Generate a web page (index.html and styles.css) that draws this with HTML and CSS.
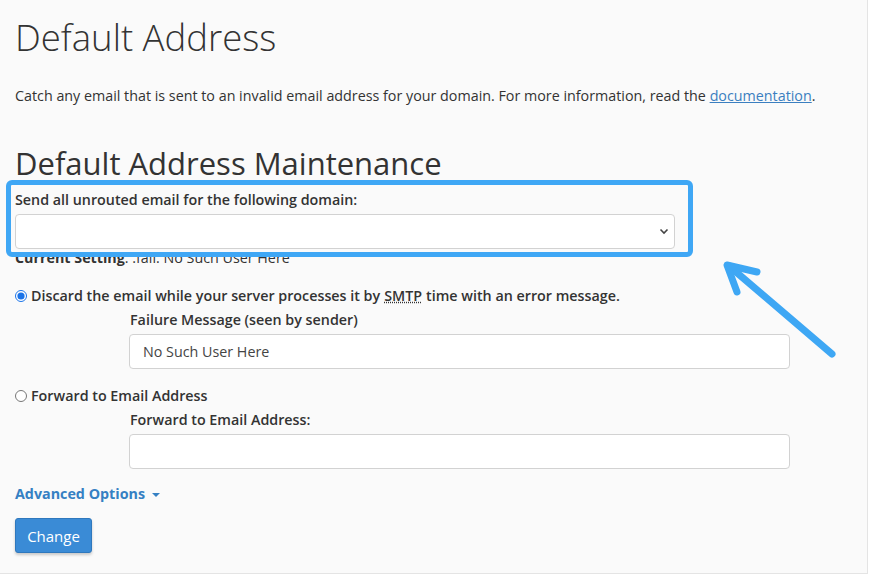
FILE: index.html
```html
<!DOCTYPE html>
<html lang="en">
<head>
  <meta charset="UTF-8">
  <title>Default Address</title>
  <link rel="stylesheet" href="styles.css">
</head>
<body>
  <div class="page">
    <h1>Default Address</h1>
    <p class="intro">Catch any email that is sent to an invalid email address for your domain. For more information, read the <a href="#">documentation</a>.</p>

    <h2>Default Address Maintenance</h2>

    <!-- domain picker -->
    <div class="domain-group">
      <label class="field-label">Send all unrouted email for the following domain:</label>
      <div class="select">
        <span class="select-value"></span>
        <svg class="chevron" width="10" height="7" viewBox="0 0 10 7">
          <path d="M1.5 1.5 L5 5 L8.5 1.5" fill="none" stroke="#444" stroke-width="1.6"/>
        </svg>
      </div>
      <div class="current"><b>Current Setting</b>: :fail: No Such User Here</div>
      <div class="highlight"></div>
    </div>

    <!-- options -->
    <div class="option">
      <label class="radio-row"><input type="radio" name="action" checked> Discard the email while your server processes it by <abbr title="Simple Mail Transfer Protocol">SMTP</abbr> time with an error message.</label>
      <div class="sub">
        <label class="field-label">Failure Message (seen by sender)</label>
        <input class="text-input" type="text" value="No Such User Here">
      </div>
    </div>

    <div class="option">
      <label class="radio-row"><input type="radio" name="action"> Forward to Email Address</label>
      <div class="sub">
        <label class="field-label">Forward to Email Address:</label>
        <input class="text-input" type="text">
      </div>
    </div>

    <a class="advanced" href="#">Advanced Options <span class="caret"></span></a>

    <button class="btn-primary">Change</button>

    <!-- annotation arrow -->
    <svg class="arrow" width="870" height="576" viewBox="0 0 870 576">
      <g stroke="#3ea7f4" stroke-width="7" stroke-linecap="round" stroke-linejoin="round" fill="none">
        <path d="M832 354 L729 266"/>
        <path d="M757 272 L727 265 L737 292"/>
      </g>
    </svg>
  </div>
</body>
</html>
```

FILE: styles.css
```css
/* Base */
body {
  margin: 0;
  background: #fff;
  font-family: "Open Sans", "Liberation Sans", sans-serif;
  font-size: 14.3px;
  line-height: 20px;
  color: #333;
}

.page {
  position: relative;
  width: 868px;
  height: 574px;
  padding: 0 15px;
  box-sizing: border-box;
  background: #fafafa;
  border-right: 1px solid #e4e4e4;
  border-bottom: 1px solid #e4e4e4;
  overflow: hidden;
}

h1 {
  margin: 0;
  padding-top: 16px;
  font-size: 36.5px;
  font-weight: 300;
  line-height: 42px;
  color: #333;
}

.intro {
  margin: 28px 0 0;
}

.intro a {
  color: #3b7fc0;
  text-decoration: underline;
}

h2 {
  margin: 41px 0 0;
  font-size: 31px;
  font-weight: 500;
  line-height: 33px;
  color: #333;
}

/* Domain group */
.domain-group {
  position: relative;
  margin-top: 10px;
}

.field-label {
  display: block;
  font-weight: 600;
}

.select {
  display: flex;
  justify-content: space-between;
  align-items: center;
  width: 660px;
  height: 35px;
  margin-top: 4px;
  padding: 0 5px 0 10px;
  box-sizing: border-box;
  background: #fff;
  border: 1px solid #d2d2d2;
  border-radius: 4px;
}

.current {
  line-height: 18px;
}

.current b {
  font-weight: 700;
}

.highlight {
  position: absolute;
  left: -9px;
  top: -10px;
  width: 687px;
  height: 77px;
  box-sizing: border-box;
  border: 5px solid #3fa7f5;
  border-radius: 6px;
}

/* Radio options */
.option {
  margin-top: 19px;
}

.option + .option {
  margin-top: 17px;
}

.radio-row {
  display: flex;
  align-items: center;
  gap: 4px;
  font-weight: 600;
}

.radio-row input {
  width: 12px;
  height: 12px;
  margin: 0;
  accent-color: #1a73e8;
}

abbr {
  text-decoration: underline dotted;
}

.sub {
  padding-left: 115px;
  margin-top: 4px;
}

.text-input {
  display: block;
  width: 661px;
  height: 35px;
  margin-top: 4px;
  margin-left: -1px;
  padding: 0 13px;
  box-sizing: border-box;
  font-family: inherit;
  font-size: 14.3px;
  color: #444;
  background: #fff;
  border: 1px solid #d2d2d2;
  border-radius: 4px;
}

.advanced {
  display: inline-block;
  margin-top: 15px;
  font-weight: 700;
  color: #3580c3;
  text-decoration: none;
}

.caret {
  display: inline-block;
  margin-left: 3px;
  vertical-align: middle;
  border-top: 4px solid #3580c3;
  border-left: 4px solid transparent;
  border-right: 4px solid transparent;
}

.btn-primary {
  display: block;
  margin-top: 14px;
  width: 77px;
  height: 35px;
  font-family: inherit;
  font-size: 15px;
  color: #fff;
  background: #3a8bd6;
  border: 1px solid #2f78bd;
  border-radius: 3px;
  box-shadow: 0 2px 3px rgba(0, 0, 0, 0.2);
}

/* Annotation */
.arrow {
  position: absolute;
  left: 0;
  top: 0;
  pointer-events: none;
}
```
